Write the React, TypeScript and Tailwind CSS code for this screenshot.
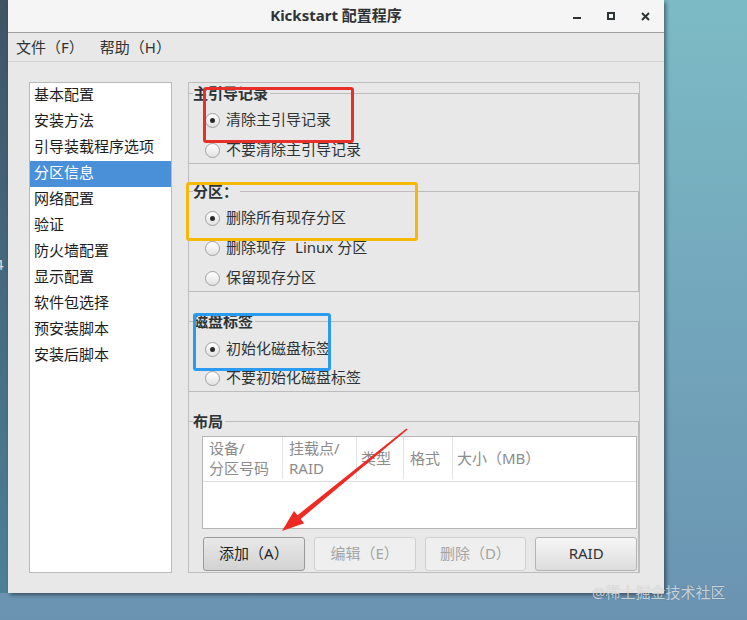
import type { ReactNode } from "react";

const sections = [
  "基本配置",
  "安装方法",
  "引导装载程序选项",
  "分区信息",
  "网络配置",
  "验证",
  "防火墙配置",
  "显示配置",
  "软件包选择",
  "预安装脚本",
  "安装后脚本",
];

function Radio({ label, checked }: { label: ReactNode; checked?: boolean }) {
  return (
    <div className="flex h-[24px] items-center gap-[6px] pl-[16px] text-[#2e3436]">
      <span className="flex h-[15px] w-[15px] items-center justify-center rounded-full border border-[#a0a0a0] bg-[linear-gradient(to_bottom,#ffffff,#e2e2e2)]">
        {checked && <span className="h-[5px] w-[5px] rounded-full bg-[#2a2a2a]" />}
      </span>
      <span className="pb-[2px]">{label}</span>
    </div>
  );
}

function Btn({ label, kind }: { label: string; kind: "focus" | "disabled" | "normal" }) {
  const cls =
    kind === "focus"
      ? "border-[#9a9a9a] bg-[linear-gradient(to_bottom,#e9e9e9,#d2d2d2)] text-[#222]"
      : kind === "disabled"
      ? "border-[#d0d0d0] bg-[#efefef] text-[#a4a4a4]"
      : "border-[#b4b4b4] bg-[linear-gradient(to_bottom,#f6f6f6,#dcdcdc)] text-[#2e3436]";
  return (
    <div className={`flex h-[34px] flex-1 items-center justify-center rounded-[3px] border pb-[2px] ${cls}`}>
      {label}
    </div>
  );
}

export default function App() {
  return (
    <div className="relative h-[620px] w-[747px] overflow-hidden bg-[linear-gradient(to_bottom,#7cbbc5,#6a93b2)] font-['Noto_Sans','Noto_Sans_CJK_SC',sans-serif] text-[15px]">
      <div className="flex h-[593px]">
        {/* desktop strip on the left */}
        <div className="w-[8px] bg-[linear-gradient(to_bottom,#3e5465,#4c8198)]" />

        {/* window */}
        <div className="flex w-[656px] flex-col bg-[#e8e8e8] shadow-[2px_2px_4px_rgba(0,0,0,0.45)]">
          {/* title bar */}
          <div className="relative flex h-[33px] shrink-0 items-center justify-center border-b border-[#9e9e9e] bg-[#f5f5f5]">
            <span className="pb-[2px] font-bold text-[#2e3436]">Kickstart 配置程序</span>
            <div className="absolute right-[14px] top-0 flex h-full items-center gap-[26px]">
              <svg width="8" height="8" viewBox="0 0 8 8">
                <rect x="0" y="5" width="8" height="2" fill="#2e3436" />
              </svg>
              <svg width="8" height="8" viewBox="0 0 8 8">
                <rect x="1" y="1" width="6" height="6" fill="none" stroke="#2e3436" strokeWidth="2" />
              </svg>
              <svg width="9" height="9" viewBox="0 0 9 9">
                <path d="M1 1 L8 8 M8 1 L1 8" stroke="#2e3436" strokeWidth="2" />
              </svg>
            </div>
          </div>

          {/* menu bar */}
          <div className="flex h-[29px] shrink-0 items-center gap-[16px] border-b border-[#d2d2d2] pl-[8px] text-[#2e3436]">
            <span>文件（F）</span>
            <span>帮助（H）</span>
          </div>

          {/* body */}
          <div className="flex flex-1 gap-[16px] pb-[20px] pl-[21px] pr-[24px] pt-[20px]">
            {/* section list */}
            <div className="w-[143px] border border-[#b9b9b9] bg-white">
              {sections.map((s, i) => (
                <div
                  key={s}
                  className={`flex h-[26px] items-center pb-[3px] pl-[4px] ${
                    i === 3 ? "bg-[#4a90d9] text-white" : "text-[#1c1c1c]"
                  }`}
                >
                  {s}
                </div>
              ))}
            </div>

            {/* options panel */}
            <div className="flex w-[452px] flex-col border border-[#bdbdbd]">
              <fieldset className="border-y border-r border-[#bcbcbc] pb-[1px] pt-[5px]">
                <legend className="ml-[4px] pr-[2px] font-bold leading-[20px] text-[#2e3436]">主引导记录</legend>
                <div className="flex flex-col gap-[6px]">
                  <Radio label="清除主引导记录" checked />
                  <Radio label="不要清除主引导记录" />
                </div>
              </fieldset>

              <fieldset className="mt-[17px] border-y border-r border-[#bcbcbc] pb-[1px] pt-[5px]">
                <legend className="ml-[4px] pr-[2px] font-bold leading-[20px] text-[#2e3436]">分区：</legend>
                <div className="flex flex-col gap-[6px]">
                  <Radio label="删除所有现存分区" checked />
                  <Radio
                    label={
                      <>
                        删除现存<span className="ml-[9px] mr-[4px]">Linux</span>分区
                      </>
                    }
                  />
                  <Radio label="保留现存分区" />
                </div>
              </fieldset>

              <fieldset className="mt-[19px] border-y border-r border-[#bcbcbc] pb-[1px] pt-[6px]">
                <legend className="ml-[4px] pr-[2px] font-bold leading-[20px] text-[#2e3436]">磁盘标签</legend>
                <div className="flex flex-col gap-[5px]">
                  <Radio label="初始化磁盘标签" checked />
                  <Radio label="不要初始化磁盘标签" />
                </div>
              </fieldset>

              <fieldset className="mt-[19px] flex flex-1 flex-col border-r border-t border-[#bcbcbc] pt-[5px]">
                <legend className="ml-[4px] pr-[2px] font-bold leading-[20px] text-[#2e3436]">布局</legend>
                <div className="ml-[13px] mr-[1px] h-[93px] border border-[#b5b5b5] bg-white">
                  <div className="flex h-[45px] border-b border-[#dedede] pb-[2px] leading-[20px] text-[#8c8c8c]">
                    <div className="flex w-[80px] items-center border-r border-[#e4e4e4] pl-[6px]">
                      设备/
                      <br />
                      分区号码
                    </div>
                    <div className="flex w-[74px] items-center border-r border-[#e4e4e4] pl-[6px]">
                      挂载点/
                      <br />
                      RAID
                    </div>
                    <div className="flex w-[47px] items-center border-r border-[#e4e4e4] pl-[4px]">类型</div>
                    <div className="flex w-[49px] items-center border-r border-[#e4e4e4] pl-[6px]">格式</div>
                    <div className="flex flex-1 items-center pl-[4px]">大小（MB）</div>
                  </div>
                </div>
                <div className="ml-[14px] mr-[1px] mt-[8px] flex gap-[9px]">
                  <Btn label="添加（A）" kind="focus" />
                  <Btn label="编辑（E）" kind="disabled" />
                  <Btn label="删除（D）" kind="disabled" />
                  <Btn label="RAID" kind="normal" />
                </div>
              </fieldset>
            </div>
          </div>
        </div>
      </div>

      {/* clipped desktop label at the left edge */}
      <span className="absolute left-[-5px] top-[253px] text-[#dcdcdc]">4</span>

      {/* annotation boxes */}
      <div className="pointer-events-none absolute left-[203px] top-[87px] h-[56px] w-[151px] rounded-[3px] border-[3px] border-[#e8302a]" />
      <div className="pointer-events-none absolute left-[186px] top-[182px] h-[59px] w-[232px] rounded-[3px] border-[3px] border-[#f6b90a]" />
      <div className="pointer-events-none absolute left-[193px] top-[313px] h-[58px] w-[138px] rounded-[3px] border-[3px] border-[#2b9bef]" />

      {/* annotation arrow */}
      <svg className="pointer-events-none absolute left-0 top-0" width="747" height="620">
        <polygon
          points="407.6,429.6 300.7,519 304.2,523.3 282,531 294,510.9 297.5,515.2 406.4,428.4"
          fill="#ee2a22"
        />
      </svg>

      {/* watermark */}
      <span className="absolute left-[592px] top-[581px] text-[15px] text-white/70 [text-shadow:0_0_1px_rgba(0,0,0,0.3)]">
        @稀土掘金技术社区
      </span>
    </div>
  );
}
